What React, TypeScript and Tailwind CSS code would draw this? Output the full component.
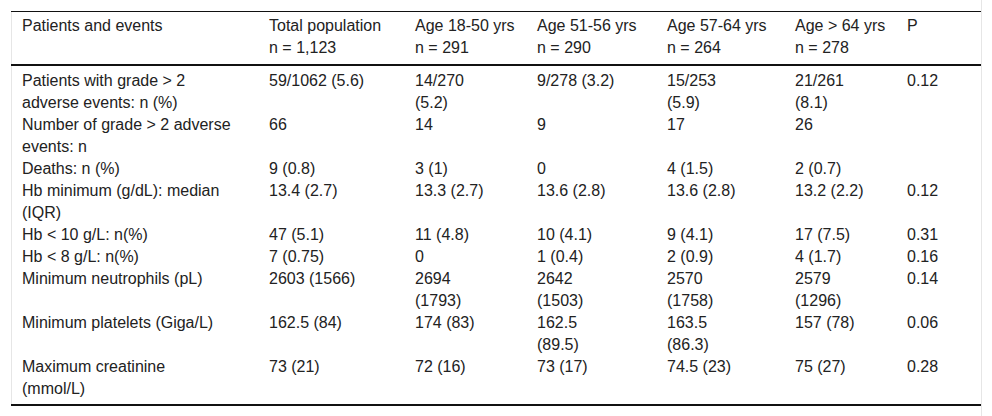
import React from 'react'

type Row = string[]

// column widths taken from the text starts in the reference
const colWidths = ['w-[247px]', 'w-[146px]', 'w-[122px]', 'w-[130px]', 'w-[128px]', 'w-[112px]', 'w-[85px]']

const headers: Row = [
  'Patients and events',
  'Total population\nn = 1,123',
  'Age 18-50 yrs\nn = 291',
  'Age 51-56 yrs\nn = 290',
  'Age 57-64 yrs\nn = 264',
  'Age > 64 yrs\nn = 278',
  'P',
]

const rows: Row[] = [
  ['Patients with grade > 2\nadverse events: n (%)', '59/1062 (5.6)', '14/270\n(5.2)', '9/278 (3.2)', '15/253\n(5.9)', '21/261\n(8.1)', '0.12'],
  ['Number of grade > 2 adverse\nevents: n', '66', '14', '9', '17', '26', ''],
  ['Deaths: n (%)', '9 (0.8)', '3 (1)', '0', '4 (1.5)', '2 (0.7)', ''],
  ['Hb minimum (g/dL): median\n(IQR)', '13.4 (2.7)', '13.3 (2.7)', '13.6 (2.8)', '13.6 (2.8)', '13.2 (2.2)', '0.12'],
  ['Hb < 10 g/L: n(%)', '47 (5.1)', '11 (4.8)', '10 (4.1)', '9 (4.1)', '17 (7.5)', '0.31'],
  ['Hb < 8 g/L: n(%)', '7 (0.75)', '0', '1 (0.4)', '2 (0.9)', '4 (1.7)', '0.16'],
  ['Minimum neutrophils (pL)', '2603 (1566)', '2694\n(1793)', '2642\n(1503)', '2570\n(1758)', '2579\n(1296)', '0.14'],
  ['Minimum platelets (Giga/L)', '162.5 (84)', '174 (83)', '162.5\n(89.5)', '163.5\n(86.3)', '157 (78)', '0.06'],
  ['Maximum creatinine\n(mmol/L)', '73 (21)', '72 (16)', '73 (17)', '74.5 (23)', '75 (27)', '0.28'],
]

const App = () => {
  return (
    <div className="w-[992px] h-[416px] bg-white font-['Liberation_Sans',Arial,sans-serif] text-[16px] leading-[22px] text-[#222]">
      <div className="w-[982px] h-full border-r border-[#e6e6e6] pt-[11px] pl-[11px]">
        <div className="w-[970px] border-l border-[#e6e6e6]">
          <table className="table-fixed border-collapse w-[970px] -ml-px">
            <thead>
              <tr className="border-t border-b-2 border-[#111]">
                {headers.map((h, i) => (
                  <th
                    key={i}
                    className={`${colWidths[i]} pl-[11px] pt-[3px] pb-[5px] text-left align-top font-normal whitespace-pre-line`}
                  >
                    {h}
                  </th>
                ))}
              </tr>
            </thead>
            <tbody className="border-b-2 border-[#111]">
              {rows.map((row, r) => (
                <tr key={r}>
                  {row.map((cell, i) => (
                    <td
                      key={i}
                      className={`pl-[11px] align-top whitespace-pre-line ${r === 0 ? 'pt-[4px]' : ''} ${r === rows.length - 1 ? 'pb-[4px]' : ''}`}
                    >
                      {cell}
                    </td>
                  ))}
                </tr>
              ))}
            </tbody>
          </table>
        </div>
      </div>
    </div>
  )
}

export default App
